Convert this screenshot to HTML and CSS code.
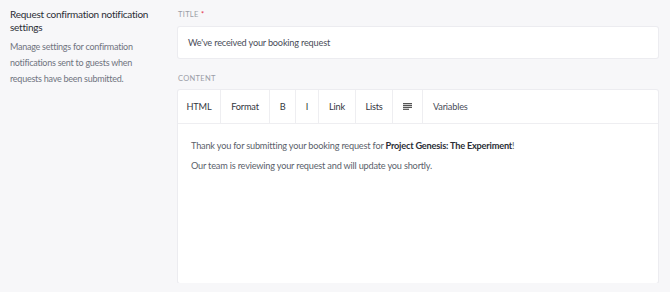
FILE: index.html
```html
<!DOCTYPE html>
<html lang="en">
<head>
  <meta charset="UTF-8" />
  <title>Request confirmation notification settings</title>
  <link rel="stylesheet" href="styles.css">
</head>
<body>
  <div class="settings">
    <div class="side">
      <h2>Request confirmation notification settings</h2>
      <p>Manage settings for confirmation notifications sent to guests when requests have been submitted.</p>
    </div>

    <div class="fields">
      <label class="field-label">TITLE <span class="req">*</span></label>
      <div class="input">We've received your booking request</div>

      <label class="field-label content-label">CONTENT</label>
      <div class="editor">
        <div class="toolbar">
          <span class="tool t-html">HTML</span>
          <span class="tool t-format">Format</span>
          <span class="tool t-b">B</span>
          <span class="tool t-i">I</span>
          <span class="tool t-link">Link</span>
          <span class="tool t-lists">Lists</span>
          <span class="tool t-align">
            <svg width="10" height="7" viewBox="0 0 10 7">
              <rect x="0" y="0" width="9" height="1.2" fill="#555"/>
              <rect x="0" y="1.9" width="9" height="1.2" fill="#555"/>
              <rect x="0" y="3.8" width="9" height="1.2" fill="#555"/>
              <rect x="0" y="5.7" width="6" height="1.2" fill="#555"/>
            </svg>
          </span>
          <span class="tool t-vars">Variables</span>
        </div>
        <div class="editor-body">
          <p>Thank you for submitting your booking request for <strong>Project Genesis: The Experiment</strong>!</p>
          <p>Our team is reviewing your request and will update you shortly.</p>
        </div>
      </div>
    </div>
  </div>
</body>
</html>
```

FILE: styles.css
```css
body {
  margin: 0;
  background: #f7f7f9;
  font-family: Lato, "Open Sans", sans-serif;
  color: #3b3f4a;
}
.settings {
  display: flex;
  padding: 8px 12px 0 10px;
}
.side {
  width: 158px;
  flex: none;
}
.side h2 {
  margin: 0;
  font-size: 10px;
  font-weight: normal;
  letter-spacing: -0.25px;
  line-height: 13px;
  color: #2b2e36;
}
.side p {
  width: 146px;
  margin: 5px 0 0;
  font-size: 9px;
  letter-spacing: -0.25px;
  line-height: 16px;
  color: #707480;
}
.fields {
  flex: 1;
  margin-left: 10px;
}
.field-label {
  display: block;
  margin-top: 1px;
  font-size: 7.5px;
  line-height: 12px;
  color: #9a9da6;
  letter-spacing: 0.3px;
}
.req {
  color: #e5354b;
}
.input {
  margin-top: 6px;
  height: 31px;
  background: white;
  border-radius: 2px;
  box-shadow: 0 0 0 1px #ececf0;
  padding-left: 10px;
  display: flex;
  align-items: center;
  font-size: 9.2px;
  letter-spacing: -0.2px;
  color: #4a4e59;
}
.content-label {
  margin-top: 15px;
}
.editor {
  margin-top: 5px;
  background: white;
  border-radius: 2px;
  box-shadow: 0 0 0 1px #ececf0;
}
.toolbar {
  display: flex;
  height: 33px;
  border-bottom: 1px solid #eeeef1;
}
.tool {
  display: flex;
  align-items: center;
  justify-content: center;
  font-size: 9.2px;
  letter-spacing: -0.2px;
  color: #33363e;
  border-right: 1px solid #eeeef1;
}
.t-html { width: 42px; }
.t-format { width: 48px; }
.t-b { width: 25px; }
.t-i { width: 22px; }
.t-link { width: 36px; }
.t-lists { width: 36px; }
.t-align { width: 29px; }
.t-vars {
  flex: 1;
  justify-content: flex-start;
  padding-left: 10px;
  border-right: none;
  color: #4a4e59;
}
.editor-body {
  height: 142px;
  padding: 17px 13px 0;
}
.editor-body p {
  margin: 0 0 10px;
  font-size: 9.2px;
  letter-spacing: -0.2px;
  line-height: 10px;
  color: #5b5f6b;
}
.editor-body strong {
  color: #2b2e36;
}
```
